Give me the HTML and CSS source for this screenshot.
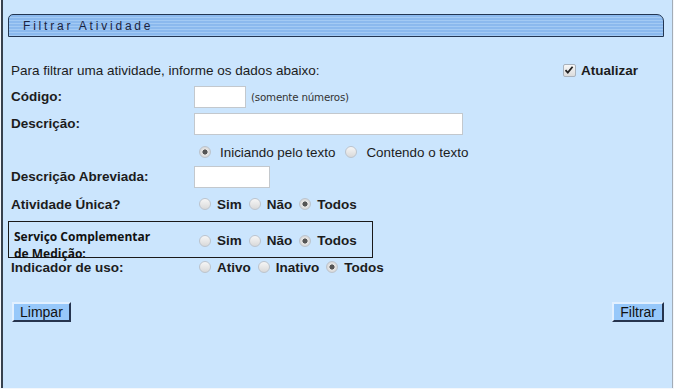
FILE: index.html
```html
<!DOCTYPE html>
<html lang="pt-BR">
<head>
    <meta charset="UTF-8">
    <title>Filtrar Atividade</title>
    <link rel="stylesheet" href="styles.css">
</head>
<body>

<div class="page">
    <div class="title-bar">Filtrar Atividade</div>

    <form class="filter-form">
        <div class="row intro">
            <span>Para filtrar uma atividade, informe os dados abaixo:</span>
            <label class="refresh">
                <span class="check">
                    <svg width="12" height="12" viewBox="0 0 12 12"><path d="M2.5 6.2 L4.8 8.6 L9.6 2.8" fill="none" stroke="#222" stroke-width="1.8"/></svg>
                </span>
                Atualizar
            </label>
        </div>

        <div class="row r-codigo">
            <span class="lbl">Código:</span>
            <input type="text" class="inp-small">
            <span class="hint">(somente números)</span>
        </div>

        <div class="row r-desc">
            <span class="lbl">Descrição:</span>
            <input type="text" class="inp-wide">
        </div>

        <div class="row r-mode">
            <span class="lbl"></span>
            <label class="opt"><input type="radio" name="modo" checked>Iniciando pelo texto</label>
            <label class="opt"><input type="radio" name="modo">Contendo o texto</label>
        </div>

        <div class="row r-unica">
            <span class="lbl">Descrição Abreviada:</span>
            <input type="text" class="inp-mid">
        </div>

        <div class="row r-unica2">
            <span class="lbl">Atividade Única?</span>
            <label class="opt bold"><input type="radio" name="unica">Sim</label>
            <label class="opt bold"><input type="radio" name="unica">Não</label>
            <label class="opt bold"><input type="radio" name="unica" checked>Todos</label>
        </div>

        <div class="row r-servico">
            <span class="lbl servico-lbl">Serviço Complementar<br>de Medição:</span>
            <label class="opt bold"><input type="radio" name="servico">Sim</label>
            <label class="opt bold"><input type="radio" name="servico">Não</label>
            <label class="opt bold"><input type="radio" name="servico" checked>Todos</label>
        </div>

        <div class="row r-uso">
            <span class="lbl">Indicador de uso:</span>
            <label class="opt bold"><input type="radio" name="uso">Ativo</label>
            <label class="opt bold"><input type="radio" name="uso">Inativo</label>
            <label class="opt bold"><input type="radio" name="uso" checked>Todos</label>
        </div>

        <div class="row r-buttons">
            <button type="button" class="btn">Limpar</button>
            <button type="button" class="btn">Filtrar</button>
        </div>
    </form>
</div>

</body>
</html>
```

FILE: styles.css
```css
body {
    margin: 0;
    padding: 0;
    background-color: #f4f7fb;
    font-family: "Liberation Sans", Arial, sans-serif;
    font-size: 13.5px;
    color: #1c1c1c;
}

.page {
    box-sizing: border-box;
    width: 672px;
    height: 388px;
    margin-left: 1px;
    padding: 14px 8px 0 5px;
    background-color: #cbe5fd;
    border-left: 2px solid #37414e;
    border-right: 1px solid #a3acb6;
}

.title-bar {
    box-sizing: border-box;
    height: 23px;
    padding-left: 14px;
    line-height: 22px;
    font-size: 12px;
    letter-spacing: 2.8px;
    color: #1b2440;
    border: 1px solid #233652;
    border-radius: 5px 7px 0 0;
    background: repeating-linear-gradient(to bottom, #8bb9ee 0, #8bb9ee 2px, #a3caf4 2px, #a3caf4 3px);
}

.filter-form {
    padding-left: 3px;
}

.row {
    display: flex;
    align-items: center;
}

.lbl {
    width: 183px;
    flex-shrink: 0;
    font-weight: bold;
}

.intro {
    margin-top: 24px;
    height: 18px;
    justify-content: space-between;
}

.refresh {
    display: flex;
    align-items: center;
    margin-right: 26px;
    font-weight: bold;
}

.check {
    display: inline-flex;
    width: 11px;
    height: 11px;
    margin-right: 5px;
    border: 1px solid #a9b2bc;
    border-radius: 2px;
    background: linear-gradient(#f7f7f7, #dcdcdc);
    overflow: hidden;
}

.check svg {
    margin: -1px 0 0 -1px;
}

input[type="text"] {
    box-sizing: border-box;
    height: 22px;
    margin: 0;
    padding: 2px;
    border: 1px solid #c3c8cd;
    background-color: #fff;
}

.inp-small { width: 52px; }
.inp-wide { width: 269px; }
.inp-mid { width: 76px; }

.hint {
    margin-left: 5px;
    font-size: 10.3px;
    font-family: "DejaVu Sans", Verdana, sans-serif;
    color: #333;
    letter-spacing: -0.2px;
}

.r-codigo { margin-top: 6px; height: 23px; }
.r-desc { margin-top: 4px; height: 23px; }
.r-mode { margin-top: 7px; height: 20px; }
.r-unica { margin-top: 3px; height: 23px; }
.r-unica2 { margin-top: 6px; height: 20px; }
.r-uso { height: 18px; }

.opt {
    display: flex;
    align-items: center;
    margin-right: 5px;
    font-size: 13.4px;
}

.opt input[type="radio"] {
    margin-right: 9px;
}

.opt.bold {
    margin-right: 2px;
    font-weight: bold;
    font-size: 13.5px;
}

.opt.bold input[type="radio"] {
    margin-right: 6px;
}

input[type="radio"] {
    appearance: none;
    -webkit-appearance: none;
    box-sizing: border-box;
    flex-shrink: 0;
    width: 12px;
    height: 12px;
    margin: 0 6px 0 5px;
    border: 1px solid #bcc4cd;
    border-radius: 50%;
    background: linear-gradient(#f6f6f6, #d9d9d9);
}

input[type="radio"]:checked {
    background: radial-gradient(circle, #555 0, #555 2.3px, #e6e6e6 2.8px, #d2d2d2 6px);
}

.r-servico {
    box-sizing: border-box;
    width: 365px;
    height: 37px;
    margin: 7px 0 0 -3px;
    padding-top: 2px;
    border: 1px solid #1a1a1a;
}

.servico-lbl {
    box-sizing: border-box;
    width: 185px;
    height: 34px;
    padding: 4px 0 0 5px;
    align-self: flex-start;
    font-family: "Open Sans", sans-serif;
    font-size: 12px;
    line-height: 17px;
    color: #111;
}

.r-buttons {
    margin-top: 26px;
    padding-left: 1px;
    justify-content: space-between;
}

.btn {
    height: 20px;
    padding: 0 6px;
    font-family: "Liberation Sans", Arial, sans-serif;
    font-size: 14px;
    color: #111;
    background-color: #97c8fa;
    border: 2px solid;
    border-color: #e2f0ff #26344e #26344e #e2f0ff;
    cursor: pointer;
}
```
